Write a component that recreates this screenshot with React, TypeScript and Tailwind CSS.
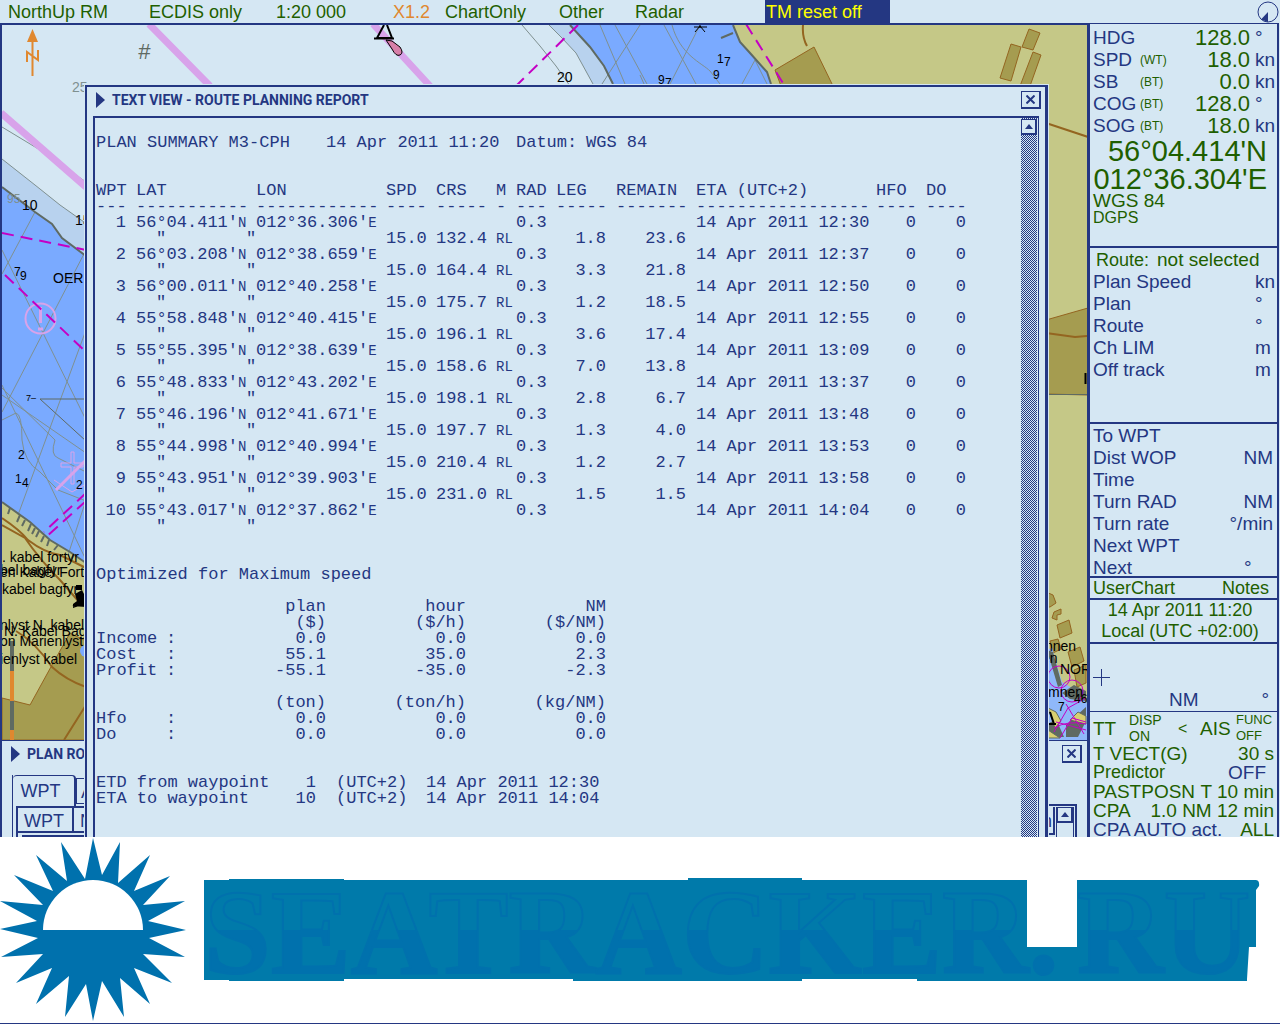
import type { ReactNode } from "react";
import clsx from "clsx";

const MENU = [
  { label: "NorthUp RM", width: "w-[141px]" },
  { label: "ECDIS only", width: "w-[127px]" },
  { label: "1:20 000", width: "w-[117px]" },
  { label: "X1.2", width: "w-[52px]", accent: true },
  { label: "ChartOnly", width: "w-[114px]" },
  { label: "Other", width: "w-[76px]" },
  { label: "Radar", width: "w-[130px]" },
];

const WAYPOINTS = [
  { lat: "56°04.411'", lon: "012°36.306'", eta: "12:30", crs: "132.4", leg: "1.8", remain: "23.6" },
  { lat: "56°03.208'", lon: "012°38.659'", eta: "12:37", crs: "164.4", leg: "3.3", remain: "21.8" },
  { lat: "56°00.011'", lon: "012°40.258'", eta: "12:50", crs: "175.7", leg: "1.2", remain: "18.5" },
  { lat: "55°58.848'", lon: "012°40.415'", eta: "12:55", crs: "196.1", leg: "3.6", remain: "17.4" },
  { lat: "55°55.395'", lon: "012°38.639'", eta: "13:09", crs: "158.6", leg: "7.0", remain: "13.8" },
  { lat: "55°48.833'", lon: "012°43.202'", eta: "13:37", crs: "198.1", leg: "2.8", remain: "6.7" },
  { lat: "55°46.196'", lon: "012°41.671'", eta: "13:48", crs: "197.7", leg: "1.3", remain: "4.0" },
  { lat: "55°44.998'", lon: "012°40.994'", eta: "13:53", crs: "210.4", leg: "1.2", remain: "2.7" },
  { lat: "55°43.951'", lon: "012°39.903'", eta: "13:58", crs: "231.0", leg: "1.5", remain: "1.5" },
  { lat: "55°43.017'", lon: "012°37.862'", eta: "14:04" },
];

const COLUMNS = [
  { title: "WPT", rule: "---", width: "w-[40px]" },
  { title: "LAT", rule: "-----------", width: "w-[120px]" },
  { title: "LON", rule: "------------", width: "w-[130px]" },
  { title: "SPD", rule: "----", width: "w-[50px]" },
  { title: "CRS", rule: "-----", width: "w-[60px]" },
  { title: "M", rule: "-", width: "w-[20px]" },
  { title: "RAD", rule: "---", width: "w-[40px]" },
  { title: "LEG", rule: "-----", width: "w-[60px]" },
  { title: "REMAIN", rule: "-------", width: "w-[80px]" },
  { title: "ETA (UTC+2)", rule: "-----------------", width: "w-[180px]" },
  { title: "HFO", rule: "----", width: "w-[50px]" },
  { title: "DO", rule: "----", width: "w-[50px]" },
];

const COSTS = [
  { label: "Income", values: ["0.0", "0.0", "0.0"] },
  { label: "Cost", values: ["55.1", "35.0", "2.3"] },
  { label: "Profit", values: ["-55.1", "-35.0", "-2.3"] },
];

const FUEL = [
  { label: "Hfo", values: ["0.0", "0.0", "0.0"] },
  { label: "Do", values: ["0.0", "0.0", "0.0"] },
];

const SENSORS = [
  { label: "HDG", source: "", value: "128.0", unit: "°" },
  { label: "SPD", source: "(WT)", value: "18.0", unit: "kn" },
  { label: "SB", source: "(BT)", value: "0.0", unit: "kn" },
  { label: "COG", source: "(BT)", value: "128.0", unit: "°" },
  { label: "SOG", source: "(BT)", value: "18.0", unit: "kn" },
];

const ROUTE_ROWS = [
  ["Plan Speed", "kn"],
  ["Plan", "°"],
  ["Route", "°"],
  ["Ch LIM", "m"],
  ["Off track", "m"],
];

const WPT_ROWS = [
  ["To WPT", ""],
  ["Dist WOP", "NM"],
  ["Time", ""],
  ["Turn RAD", "NM"],
  ["Turn rate", "°/min"],
  ["Next WPT", ""],
  ["Next", "°"],
];

function TopBar() {
  return (
    <header className="flex h-[23px] items-center pl-2 text-[18px] leading-[22px] text-[#1f5f00]">
      <nav className="flex" aria-label="Display">
        {MENU.map((item) => (
          <div key={item.label} className={item.width}>
            <button type="button" className={clsx("whitespace-nowrap", item.accent && "text-[#e0882f]")}>
              {item.label}
            </button>
          </div>
        ))}
      </nav>
      <button type="button" className="h-[23px] w-[125px] bg-[#243782] pl-px text-left text-[#ffff00]">
        TM reset off
      </button>
      <svg className="mr-px ml-auto" width="22" height="22" viewBox="0 0 22 22" aria-hidden="true">
        <circle cx="11" cy="11" r="10" fill="none" stroke="#243782" />
        <path d="M11 11v10L4 18.500z" fill="#243782" />
      </svg>
    </header>
  );
}

function Chart() {
  return (
    <svg
      className="absolute inset-0 h-full w-full"
      viewBox="2 25 1085 812"
      preserveAspectRatio="xMinYMin slice"
      fontFamily="Liberation Sans, sans-serif"
      fontSize="14"
      aria-hidden="true"
    >
      {/* sea and land, top strip */}
      <path d="M549 25L562 38L576 53L593 84H613L604 66L590 47L570 25z" fill="#b8d2ee" />
      <path d="M570 25L590 47L604 66L613 84H771L767 72L750 53L740 42L733 25z" fill="#7aaaff" />
      <path d="M733 25L740 42L750 53L767 72L771 84V90H1040V740H1087V25z" fill="#c5c887" />
      <g fill="none" stroke="#7f9090">
        <path d="M522 25L540 46L556 66L570 86M549 25L562 38L576 53L593 84" />
        <path d="M600 25l25 59M615 25l32 59M640 25l-38 59M664 25l32 59M672 25c8 30 30 38 38 46l10 13M700 25l-30 59M755 60l-13 24M755 60l12 24M640 75l4 9" />
      </g>
      <path d="M570 25L590 47L604 66L613 84M733 25L740 42L750 53L767 72L771 84M721 38l12-5" fill="none" stroke="#5f6a62" strokeWidth="2" />
      <path d="M775 70L814 47L833 86H781z" fill="#a59c50" stroke="#946520" />
      <path d="M803 25q-1 12 4 21" fill="none" stroke="#946520" strokeWidth="2" />
      <path d="M1029 29L1040 33L1033 50L1022 47zM1011 44L1021 47L1011 81L1000 78zM1033 52L1041 55L1030 86H1020z" fill="#a59c50" stroke="#946520" />

      {/* sea and land, left strip */}
      <path d="M2 159L35 185L60 205L84 222V255L62 238L52 224L35 212L2 187z" fill="#b8d2ee" />
      <path d="M2 187L35 212L52 224L62 238L86 256V562H2z" fill="#7aaaff" />
      <path d="M2 502L30 522L50 540L70 552L86 563V740H2z" fill="#c5c887" />
      <path d="M2 698L30 705L52 665L70 633L86 641V740H2z" fill="#a59c50" stroke="#946520" />
      <path d="M86 645a6 6 0 0 0 0 12z" fill="#7aaaff" />
      <g fill="none" stroke="#7f9090">
        <path d="M2 127L45 153L86 182M2 159L35 185L60 205L84 222" />
        <path d="M35 212L2 274M2 250L86 420M86 250L2 412M2 385L86 560M86 330L18 515M2 388L55 440Q50 455 58 458L86 472M2 395L86 453M2 420L16 413Q22 414 22 440Q24 462 40 472L58 490L86 501M86 500L68 555" />
      </g>
      <path d="M2 187L35 212L52 224L62 238L86 256M2 502L30 522L50 540L70 552L86 563" fill="none" stroke="#5f6a62" strokeWidth="2" />
      <path d="M86 399H40L86 441" fill="none" stroke="#5f6a62" />
      <path d="M10 508l-2 6M20 515l-3 7M25 520l-3 6M31 524l-3 7M35 528l-3 6M39 531l-3 6M44 536l-3 6M49 540l-2 6M58 545l-4 5M74 554l-3 6" stroke="#5f6a62" strokeWidth="2" />
      <path d="M2 518Q20 530 28 540Q45 553 60 555L86 568M2 525L25 538Q40 560 60 580L80 603M16 631Q35 642 52 667Q66 680 86 687M86 705L64 740" fill="none" stroke="#946520" strokeWidth="2" />

      {/* traffic lanes and cables */}
      <g fill="none" stroke="#d8a3ea">
        <path d="M149 24L210 86M373 24L430 86M1 113L86 187" strokeWidth="7" />
        <circle cx="40.500" cy="318.500" r="15" strokeWidth="2" />
        <path d="M40.500 307v16M38 329h5" strokeWidth="3" />
        <path d="M56 490L86 460" strokeWidth="3" />
        <path d="M71 452h3v11h9v4h-9v17h-3v-17H61v-4h10zM54 480l18 12 14-8" />
      </g>
      <g fill="none" stroke="#c400c4" strokeWidth="2" strokeDasharray="12 7">
        <path d="M578 25L516 86M746 24L786 88M2 233L86 250M5 275L86 352M86 493L44 532M86 501L46 537" />
      </g>

      {/* north arrow and scale bar */}
      <path d="M32.500 40v36M27 62V52l11 8V50" fill="none" stroke="#e0882f" strokeWidth="2" />
      <path d="M32.500 29L38 42H27z" fill="#e0882f" />
      <path d="M12 641v99" stroke="#5f6a62" strokeWidth="4" />
      <path d="M12 671v30M12 730v10" stroke="#e0882f" strokeWidth="4" />

      {/* buoys */}
      <path d="M384 25L377 38H392L387 25M374 38.500h20" fill="none" stroke="#000" strokeWidth="2" />
      <path d="M386 40l6 1 8 6q4 6 0 8t-8-6z" fill="#d77fa8" stroke="#000" />
      <path d="M76 585h6v5h-6zM75 594l7-4 3 6v8l-12 4v-4l4-3zM72 606l14-5v6z" fill="#000" />
      <path d="M695 32l5-6 5 6M694 27h13M700 24v4" fill="none" stroke="#000" />

      {/* right strip */}
      <path d="M1046 123L1088 137" fill="none" stroke="#946520" strokeWidth="2" />
      <path d="M1046 320L1088 308V395L1046 394z" fill="#a59c50" stroke="#946520" />
      <path d="M1046 333L1075 337L1088 336" fill="none" stroke="#946520" strokeWidth="2" />
      <path d="M1046 394.500h42" stroke="#5f6a62" />
      <path d="M1085.500 373v11" stroke="#000" strokeWidth="2" />
      <path d="M1046 592l7 3 3 8-6 4h-4zM1054 612l7-3v5l-4 1v5l-5-2zM1057 625l12-5 3 13-12 5zM1050 641l8-2 3 10-8 4zM1068 652l12-5 4 14-12 6zM1074 670l12-5v18l-9 4z" fill="#a59c50" stroke="#946520" />
      <path d="M1046 650l6-2 10 34 20 12 6 12v34h-42z" fill="#8fb8fa" />
      <path d="M1047 650l6 2 9 33-4 2zM1062 693l12-8 12 6v10l-16-2zM1066 725l20-18v14l-8 16h-12zM1046 725l10-6 8 18h-18z" fill="#5f6a62" />
      <path d="M1048 708l8 4 5 9-6 7zM1070 720l8-8 8 4v8zM1048 730l12 8h-12z" fill="#d8cf70" stroke="#5f6a62" />
      <g fill="none" stroke="#c400c4">
        <circle cx="1059" cy="677" r="11" />
        <circle cx="1072" cy="691" r="11" />
        <path d="M1054 732l14-24 18-10M1056 722l30 8M1060 738l12-20 14 4M1054 728q14-8 32-4M1066 704l18 30" />
      </g>
      <path d="M1048 708v16M1050 712l4 12M1046 724h10" stroke="#000" strokeWidth="2" />

      {/* soundings */}
      <g fill="#000" fontSize="12">
        <text x="22" y="210" fontSize="14">10</text>
        <text x="75" y="225" fontSize="14">15</text>
        <text x="14" y="276">7</text>
        <text x="20" y="280">9</text>
        <text x="26" y="401" fontSize="9">7–</text>
        <text x="18" y="459">2</text>
        <text x="15" y="483">1</text>
        <text x="22" y="487">4</text>
        <text x="76" y="489">2</text>
        <text x="557" y="82" fontSize="14">20</text>
        <text x="717" y="63">1</text>
        <text x="724" y="66">7</text>
        <text x="713" y="79">9</text>
        <text x="658" y="84">9</text>
        <text x="665" y="87">7</text>
      </g>
      <text x="72" y="92" fill="#7f9090">25</text>
      <text x="7" y="203" fontSize="12" fill="#7f9090">95</text>
      <text x="138" y="59" fontSize="22" fontStyle="italic" fill="#5f6a62">#</text>

      {/* place names */}
      <g fill="#000">
        <text x="53" y="283">OER</text>
        <text x="2" y="562">. kabel fortyr</text>
        <text x="0" y="575">bel bagfyr</text>
        <text x="0" y="577">en Kabel Fort</text>
        <text x="2" y="594">kabel bagfyr</text>
        <text x="0" y="630">nlyst N. kabel</text>
        <text x="4" y="636">N. Kabel Bag</text>
        <text x="0" y="646">on Marienlyst</text>
        <text x="0" y="664">ienlyst kabel</text>
        <text x="1045" y="651">nnen</text>
        <text x="1042" y="663">en</text>
        <text x="1060" y="674">NOR</text>
        <text x="1048" y="697">mnen</text>
        <text x="1058" y="711" fontSize="12">7</text>
        <text x="1074" y="703" fontSize="12">46</text>
      </g>
    </svg>
  );
}

function Marker() {
  return (
    <svg width="9" height="16" viewBox="0 0 9 16" aria-hidden="true">
      <path d="M0 0l9 8-9 8z" fill="#243782" />
    </svg>
  );
}

function CloseButton({ label }: { label: string }) {
  return (
    <button
      type="button"
      aria-label={label}
      className="flex h-[18px] w-5 items-center justify-center border border-r-2 border-b-2 border-[#243782]"
    >
      <svg width="9" height="9" viewBox="0 0 9 9" aria-hidden="true">
        <path d="M0.500 0.500l8 8M8.500 0.500l-8 8" stroke="#243782" strokeWidth="2" />
      </svg>
    </button>
  );
}

function ScrollUp() {
  return (
    <button
      type="button"
      aria-label="Scroll up"
      className="flex h-4 w-full shrink-0 items-center justify-center border border-r-2 border-b-2 border-[#243782] bg-[#d5e7f3]"
    >
      <svg width="8" height="5" viewBox="0 0 8 5" aria-hidden="true">
        <path d="M0 5L4 0L8 5z" fill="#243782" />
      </svg>
    </button>
  );
}

function Small({ children }: { children: ReactNode }) {
  return <span className="text-[14px]">{children}</span>;
}

function WaypointTable() {
  return (
    <table className="mt-8 table-fixed border-collapse text-left whitespace-nowrap">
      <thead>
        <tr className="h-4">
          {COLUMNS.map((col) => (
            <th key={col.title} scope="col" className={clsx("p-0 font-normal", col.width)}>
              {col.title}
            </th>
          ))}
        </tr>
        <tr className="h-4" aria-hidden="true">
          {COLUMNS.map((col) => (
            <td key={col.title} className="p-0">
              {col.rule}
            </td>
          ))}
        </tr>
      </thead>
      {WAYPOINTS.map((wp, i) => (
        <tbody key={wp.lat}>
          <tr className="h-4">
            <td className="p-0 pr-2.5 text-right">{i + 1}</td>
            <td className="p-0">
              {wp.lat}
              <Small>N</Small>
            </td>
            <td className="p-0">
              {wp.lon}
              <Small>E</Small>
            </td>
            <td colSpan={3} className="p-0" />
            <td className="p-0">0.3</td>
            <td colSpan={2} className="p-0" />
            <td className="p-0">14 Apr 2011 {wp.eta}</td>
            <td className="p-0 pr-2.5 text-right">0</td>
            <td className="p-0 pr-2.5 text-right">0</td>
          </tr>
          <tr className="h-4">
            <td className="p-0" />
            <td colSpan={2} className="p-0 pl-5">
              <span className="inline-block w-[90px]">"</span>"
            </td>
            <td className="p-0">{wp.crs && "15.0"}</td>
            <td className="p-0">{wp.crs}</td>
            <td colSpan={2} className="p-0">
              {wp.crs && <Small>RL</Small>}
            </td>
            <td className="p-0 pr-2.5 text-right">{wp.leg}</td>
            <td className="p-0 pr-2.5 text-right">{wp.remain}</td>
            <td colSpan={3} className="p-0" />
          </tr>
        </tbody>
      ))}
    </table>
  );
}

function SumTable({ heads, rows }: { heads: string[][]; rows: typeof COSTS }) {
  return (
    <table className="table-fixed border-collapse text-right whitespace-nowrap">
      <thead>
        {heads.map((cells) => (
          <tr key={cells.join()} className="h-4">
            <td className="w-[70px] p-0" />
            <td className="w-[20px] p-0" />
            {cells.map((cell) => (
              <th key={cell} scope="col" className="w-[140px] p-0 font-normal">
                {cell}
              </th>
            ))}
          </tr>
        ))}
      </thead>
      <tbody>
        {rows.map((row) => (
          <tr key={row.label} className="h-4">
            <th scope="row" className="p-0 text-left font-normal">
              {row.label}
            </th>
            <td className="p-0 text-left">:</td>
            {row.values.map((value, i) => (
              <td key={i} className="p-0">
                {value}
              </td>
            ))}
          </tr>
        ))}
      </tbody>
    </table>
  );
}

function ReportWindow() {
  return (
    <section className="relative mt-[60px] mr-[39px] ml-[83px] flex flex-1 flex-col border-t-2 border-r-3 border-l-2 border-[#243782] bg-[#d5e7f3] outline outline-[#d5e7f3]">
      <div className="mb-[3px] flex h-[26px] items-center pr-1 pl-[9px]">
        <Marker />
        <h1 className="ml-[7px] font-[Roboto,sans-serif] text-[14px] leading-4 font-bold">
          TEXT VIEW - ROUTE PLANNING REPORT
        </h1>
        <div className="ml-auto">
          <CloseButton label="Close text view" />
        </div>
      </div>
      <div className="mr-1.5 ml-1.5 flex flex-1 border-t-2 border-r border-l-2 border-[#243782]">
        <div className="flex-1 pt-[17px] pb-[30px] pl-px font-['Liberation_Mono',monospace] text-[17px] leading-4">
          <p className="flex whitespace-pre">
            <span className="w-[230px]">PLAN SUMMARY M3-CPH</span>
            <span className="w-[190px]">14 Apr 2011 11:20</span>
            <span className="w-[70px]">Datum:</span>
            <span>WGS 84</span>
          </p>
          <WaypointTable />
          <p className="mt-8">Optimized for Maximum speed</p>
          <div className="mt-4 flex flex-col items-start gap-4">
            <SumTable
              heads={[
                ["plan", "hour", "NM"],
                ["($)", "($/h)", "($/NM)"],
              ]}
              rows={COSTS}
            />
            <SumTable heads={[["(ton)", "(ton/h)", "(kg/NM)"]]} rows={FUEL} />
          </div>
          <div className="mt-8 grid grid-cols-[190px_50px_90px_auto] justify-start whitespace-nowrap">
            <span>ETD from waypoint</span>
            <span className="pr-5 text-right">1</span>
            <span>(UTC+2)</span>
            <span>14 Apr 2011 12:30</span>
            <span>ETA to waypoint</span>
            <span className="pr-5 text-right">10</span>
            <span>(UTC+2)</span>
            <span>14 Apr 2011 14:04</span>
          </div>
        </div>
        <div className="mr-px flex w-4 flex-col bg-[repeating-conic-gradient(#243782_0_25%,#d5e7f3_0_50%)] bg-size-[2px_2px] pt-px">
          <ScrollUp />
        </div>
      </div>
    </section>
  );
}

function PlanRouteWindow() {
  return (
    <section className="absolute inset-x-0 bottom-0 flex h-[97px] flex-col overflow-hidden border-t border-[#243782] bg-[#d5e7f3] text-[18px]">
      <div className="flex h-[26px] shrink-0 items-center pr-[5px] pl-[9px]">
        <Marker />
        <h2 className="ml-[7px] font-[Roboto,sans-serif] text-[14px] leading-4 font-bold">PLAN RO</h2>
        <div className="ml-auto">
          <CloseButton label="Close plan route" />
        </div>
      </div>
      <div className="mt-2 flex min-h-0 flex-1 items-stretch justify-between">
        <div className="ml-2.5 w-[90px] border-l border-[#243782]">
          <div className="flex items-start">
            <button type="button" className="h-[31px] w-[63px] rounded-t-sm border-t border-r-2 border-[#243782] pr-1.5">
              WPT
            </button>
            <button type="button" className="mt-[3px] h-[26px] w-6 border border-[#243782] pl-1 text-left">
              A
            </button>
          </div>
          <div className="ml-[3px] border-t-2 border-l-2 border-[#243782]">
            <div className="flex h-[25px] border-b-2 border-[#243782] leading-[26px]">
              <span className="w-[56px] border-r-2 border-[#243782] pl-1.5">WPT</span>
              <span className="pl-1.5">N</span>
            </div>
            <div className="mt-0.5 ml-1 h-2 border-t-2 border-[#243782]" />
          </div>
        </div>
        <div className="mt-[29px] mr-2.5 flex border-t-2 border-r-2 border-[#243782] pt-px pr-px">
          <span className="h-[28px] border-r-2 border-b-2 border-[#243782] pr-px leading-7">n</span>
          <div className="ml-px w-[18px] border-x border-[#243782]">
            <ScrollUp />
          </div>
        </div>
      </div>
    </section>
  );
}

function Panel({ className, children }: { className?: string; children: ReactNode }) {
  return <section className={clsx("border-b-2 border-[#243782] pl-[3px]", className)}>{children}</section>;
}

function Sidebar() {
  return (
    <aside className="mr-px w-[192px] shrink-0 border-t border-r-2 border-l-3 border-[#243782] text-[19px] leading-[22px] whitespace-nowrap">
      <Panel className="pt-[3px] pb-[19px]">
        {SENSORS.map((s) => (
          <div key={s.label} className="flex">
            <span className="w-[47px]">{s.label}</span>
            <span className="w-8 text-[12px] text-[#1f5f00]">{s.source}</span>
            <span className="flex-1 pr-[5px] text-right text-[22px] text-[#1f5f00]">{s.value}</span>
            <span className="w-[22px]">{s.unit}</span>
          </div>
        ))}
        <div className="text-[#1f5f00]">
          <p className="pr-2.5 text-right text-[29px] leading-7">56°04.414'N</p>
          <p className="pr-2.5 text-right text-[29px] leading-7">012°36.304'E</p>
          <p className="leading-4">WGS 84</p>
          <p className="text-[16px] leading-[18px]">DGPS</p>
        </div>
      </Panel>

      <Panel className="pt-px pb-[41px]">
        <p className="flex gap-2 pl-[3px] text-[#1f5f00]">
          <span className="text-[18px]">Route:</span>
          <span>not selected</span>
        </p>
        {ROUTE_ROWS.map(([label, unit]) => (
          <div key={label} className="flex justify-between">
            <span>{label}</span>
            <span className="w-[22px]">{unit}</span>
          </div>
        ))}
      </Panel>

      <Panel className="h-[154px] pt-px">
        {WPT_ROWS.map(([label, unit]) => (
          <div key={label} className="flex justify-between pr-1">
            <span>{label}</span>
            <span className="min-w-[29px]">{unit}</span>
          </div>
        ))}
      </Panel>

      <Panel className="flex justify-between pr-2 text-[18px] leading-5 text-[#1f5f00]">
        <button type="button">UserChart</button>
        <button type="button">Notes</button>
      </Panel>

      <Panel className="pr-2.5 text-center text-[18px] leading-[21px] text-[#1f5f00]">
        <p>14 Apr 2011 11:20</p>
        <p>Local (UTC +02:00)</p>
      </Panel>

      <section className="border-b border-[#243782] pt-[25px] pl-[3px]">
        <svg width="17" height="17" viewBox="0 0 17 17" aria-hidden="true">
          <path d="M8.500 0v17M0 8.500h17" stroke="#243782" />
        </svg>
        <div className="flex justify-between pt-[3px] pr-2 pl-[76px]">
          <span>NM</span>
          <span>°</span>
        </div>
      </section>

      <section className="pr-[3px] pl-[3px] leading-[19px] text-[#1f5f00]">
        <div className="flex h-8 items-center">
          <span className="w-9">TT</span>
          <button type="button" className="w-[49px] text-left text-[14px] leading-4">
            DISP
            <br />
            ON
          </button>
          <span className="w-[22px] text-[16px]">&lt;</span>
          <span className="w-9">AIS</span>
          <button type="button" className="text-left text-[13px] leading-4">
            FUNC
            <br />
            OFF
          </button>
        </div>
        <div className="flex justify-between">
          <span>T VECT(G)</span>
          <span>30 s</span>
        </div>
        <div className="flex justify-between pr-2">
          <span className="text-[18px]">Predictor</span>
          <span className="text-[#243782]">OFF</span>
        </div>
        <div className="flex justify-between">
          <span>PASTPOSN</span>
          <span>T 10 min</span>
        </div>
        <div className="flex justify-between">
          <span>CPA</span>
          <span>1.0 NM 12 min</span>
        </div>
        <div className="flex h-[17px] justify-between">
          <span className="text-[#243782]">CPA AUTO act.</span>
          <span>ALL</span>
        </div>
      </section>
    </aside>
  );
}

function Footer() {
  return (
    <footer className="flex h-[187px] items-start border-b border-[#243782] bg-white">
      <svg className="w-[187px] shrink-0" viewBox="0 837 187 186" aria-hidden="true">
        <path
          d="M93 838L102 875L120 842L118 883L150 855L134 891L170 876L143 905L185 901L148 921L186 930L149 938L185 957L143 954L172 983L134 968L150 1004L120 978L124 1017L102 981L93 1021L86 984L65 1017L69 976L36 1004L52 968L16 983L43 954L1 957L38 938L0 929L37 921L0 901L43 905L14 875L53 891L36 855L67 881L61 842L85 879z"
          fill="#0071ad"
        />
        <path d="M43 930a50 50 0 0 1 100 0z" fill="#fff" />
      </svg>
      <svg className="min-w-0 flex-1" viewBox="187 837 1093 186" role="img" aria-label="SEATRACKER.RU">
        <defs>
          <linearGradient id="tide" gradientUnits="userSpaceOnUse" x1="0" y1="880" x2="0" y2="980">
            <stop offset="0.500" stopColor="#007aaa" />
            <stop offset="0.500" stopColor="#0071ad" />
          </linearGradient>
        </defs>
        <path
          d="M204 880H229V879H344V880H688V878H802V880H1027V947H1077V880H1254Q1260 879 1259 886L1256 890V947H1249L1247 979V981H917V979H802V981H573V979H344V981H229V980H204z"
          fill="#007aaa"
        />
        <text
          y="973"
          fontFamily="Liberation Serif, serif"
          fontWeight="700"
          fontSize="120"
          fill="url(#tide)"
          stroke="#0071ad"
          strokeWidth="2"
        >
          <tspan x="204">SEATRACKER.</tspan>
          <tspan x="1077">RU</tspan>
        </text>
      </svg>
    </footer>
  );
}

export default function App() {
  return (
    <div className="bg-[#d5e7f3] font-['Liberation_Sans',Arial,sans-serif] text-[#243782]">
      <TopBar />
      <div className="flex">
        <main className="relative flex min-w-0 flex-1 flex-col overflow-hidden border-t-2 border-l-2 border-[#243782]">
          <Chart />
          <PlanRouteWindow />
          <ReportWindow />
        </main>
        <Sidebar />
      </div>
      <Footer />
    </div>
  );
}
